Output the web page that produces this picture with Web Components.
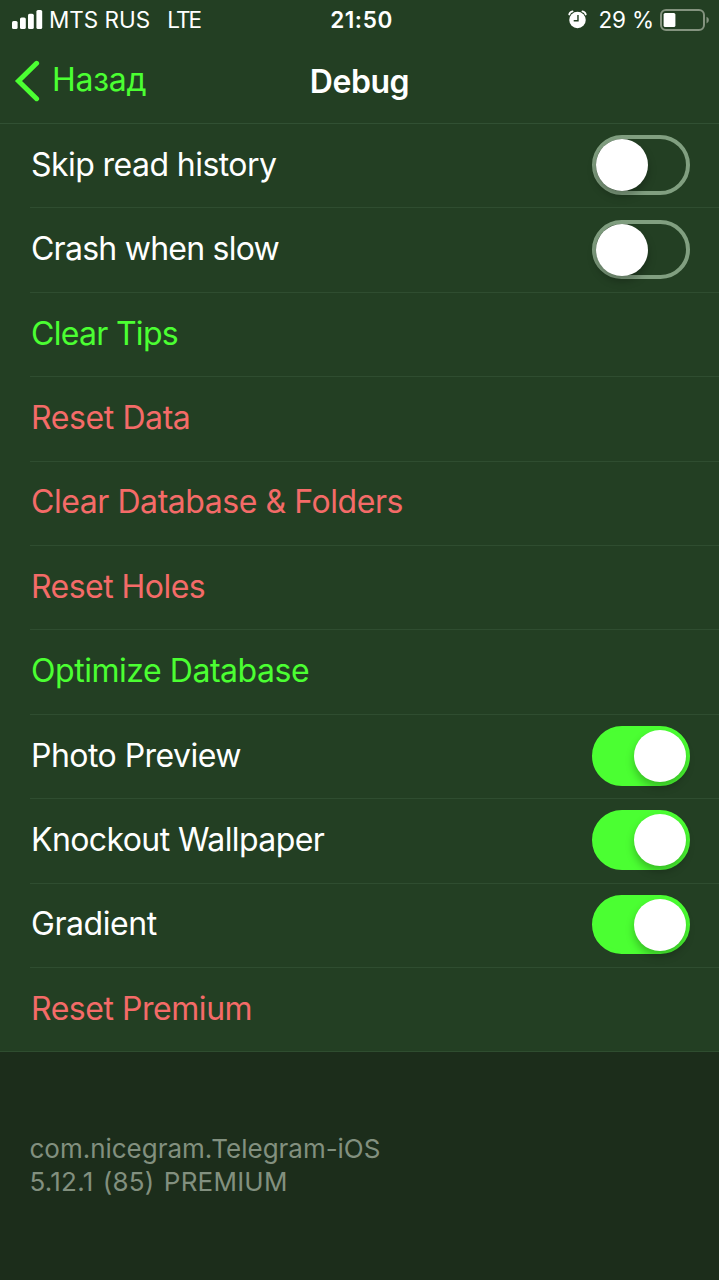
<!DOCTYPE html>
<html lang="ru">
<head>
<meta charset="utf-8">
<title>Debug</title>
<style>
html,body{margin:0;height:100%;background:#1c2d1b;overflow:hidden}
body{font-family:Inter,"Liberation Sans",sans-serif;color:#fff}
</style>
</head>
<body>
<debug-screen></debug-screen>
<script>
const define = (name, html, setup) => customElements.define(name, class extends HTMLElement {
  constructor() {
    super();
    this.attachShadow({mode: 'open'}).innerHTML = html;
  }
  connectedCallback() { if (setup) setup(this, this.shadowRoot); }
});

define('status-bar', `
<style>
:host{display:grid;grid-template-columns:1fr auto 1fr;align-items:center;height:40px;padding:0 9px 0 11px;font-size:22.5px;line-height:40px;white-space:pre}
.left,.right{display:flex;align-items:center}
.right{justify-content:flex-end}
svg{display:block;flex:none}
.carrier{margin-left:6px;letter-spacing:0}
.net{margin-left:17px;letter-spacing:-1.9px}
.time{font-weight:600;letter-spacing:.6px;padding-left:2px}
.pct{margin:0 6px 0 12px;letter-spacing:-.15px}
</style>
<div class="left">
<svg width="32" height="20" viewBox="0 0 32 20" fill="#fff"><rect x="1" y="11" width="5.6" height="8" rx="1.6"/><rect x="9" y="7.5" width="5.8" height="11.5" rx="1.6"/><rect x="17" y="3.7" width="5.8" height="15.3" rx="1.6"/><rect x="25.4" y="0" width="5.8" height="19" rx="1.6"/></svg>
<span class="carrier">MTS RUS</span><span class="net">LTE</span>
</div>
<span class="time">21:50</span>
<div class="right">
<svg width="19" height="20" viewBox="0 0 20 20"><circle cx="10" cy="10" r="8.7" fill="#fff"/><path d="M1.3 4.2Q2 1.4 4.8 1M15.2 1Q18 1.4 18.7 4.2" fill="none" stroke="#fff" stroke-width="1.9" stroke-linecap="round"/><path d="M10.5 4.8v6H6" fill="none" stroke="#233f23" stroke-width="1.5"/></svg>
<span class="pct">29 %</span>
<svg width="50" height="23" viewBox="0 0 50 23"><rect x="1" y="1.1" width="43" height="20" rx="5" fill="none" stroke="#84937f" stroke-width="2"/><rect x="3.6" y="3.9" width="11.8" height="14.2" rx="1.6" fill="#fff"/><path d="M46.5 7.8q2.4 1 2.4 3.3t-2.4 3.3z" fill="#84937f"/></svg>
</div>`);

define('nav-bar', `
<style>
:host{display:grid;grid-template-columns:1fr auto 1fr;align-items:center;height:84px;box-sizing:border-box;padding:0 14px 1px;border-bottom:1px solid #315033}
.back{display:flex;align-items:center;color:#4bff32;font-size:32px;letter-spacing:-.25px}
.back span{margin-top:-3px}
svg{display:block;margin-right:12px}
.title{font-weight:600;font-size:32px;letter-spacing:-.45px}
</style>
<div class="back"><svg width="26" height="42" viewBox="0 0 26 42" fill="none" stroke="#4bff32" stroke-width="5" stroke-linecap="round" stroke-linejoin="miter"><path d="M22.6 3.3L4.5 21L22.6 38.7"/></svg><span>Назад</span></div>
<span class="title"><slot></slot></span>`);

define('toggle-switch', `
<style>
:host{display:flex;box-sizing:border-box;width:98px;height:59.5px;border-radius:30px;border:4px solid #819f80;margin-top:-1.6px;flex:none}
i{display:block;width:52px;height:52px;border-radius:50%;background:#fff;box-shadow:0 5px 9px #0004}
:host([on]){background:#4bff32;border-color:#4bff32;justify-content:flex-end}
</style><i></i>`);

define('list-row', `
<style>
:host{display:block;height:84.42px;box-sizing:border-box;padding-left:30.4px}
.in{display:flex;align-items:center;justify-content:space-between;height:100%;box-sizing:border-box;padding:0 29px 0 .6px;border-bottom:1px solid #2f4d30;font-size:32px}
:host([last]){padding-left:0}
:host([last]) .in{padding-left:31px}
:host([kind=action]){color:#4bff32}
:host([kind=danger]){color:#f46b68}
span{margin-top:-3px;white-space:nowrap}
</style>
<div class="in"><span><slot></slot></span></div>`, (el, root) => {
  if (el.dataset.track) root.querySelector('span').style.letterSpacing = el.dataset.track + 'px';
  if (el.hasAttribute('switch')) {
    const s = document.createElement('toggle-switch');
    s.toggleAttribute('on', el.getAttribute('switch') === 'on');
    root.querySelector('.in').append(s);
  }
});

define('list-footer', `
<style>
:host{display:block;padding:81px 29.5px 0;font-size:26px;line-height:32.5px;color:#82907f}
div{white-space:nowrap}
.id{letter-spacing:-.02px}
.version{letter-spacing:.22px;word-spacing:1.8px}
</style>
<div class="id">com.nicegram.Telegram-iOS</div><div class="version">5.12.1 (85) PREMIUM</div>`);

define('debug-screen', `
<style>
:host{display:block;width:719px;height:1280px;overflow:hidden;background:#1c2d1b}
section{background:#233f23}
</style>
<section>
<status-bar></status-bar>
<nav-bar>Debug</nav-bar>
<list-row switch="off" data-track="-.56">Skip read history</list-row>
<list-row switch="off" data-track="-.75">Crash when slow</list-row>
<list-row kind="action" data-track="-.7">Clear Tips</list-row>
<list-row kind="danger" data-track="-.4">Reset Data</list-row>
<list-row kind="danger" data-track="-.44">Clear Database &amp; Folders</list-row>
<list-row kind="danger" data-track="-.54">Reset Holes</list-row>
<list-row kind="action" data-track="-.46">Optimize Database</list-row>
<list-row switch="on" data-track="-.53">Photo Preview</list-row>
<list-row switch="on" data-track="-.59">Knockout Wallpaper</list-row>
<list-row switch="on" data-track="-.42">Gradient</list-row>
<list-row kind="danger" last data-track="-.46">Reset Premium</list-row>
</section>
<list-footer></list-footer>`);
</script>
</body>
</html>
